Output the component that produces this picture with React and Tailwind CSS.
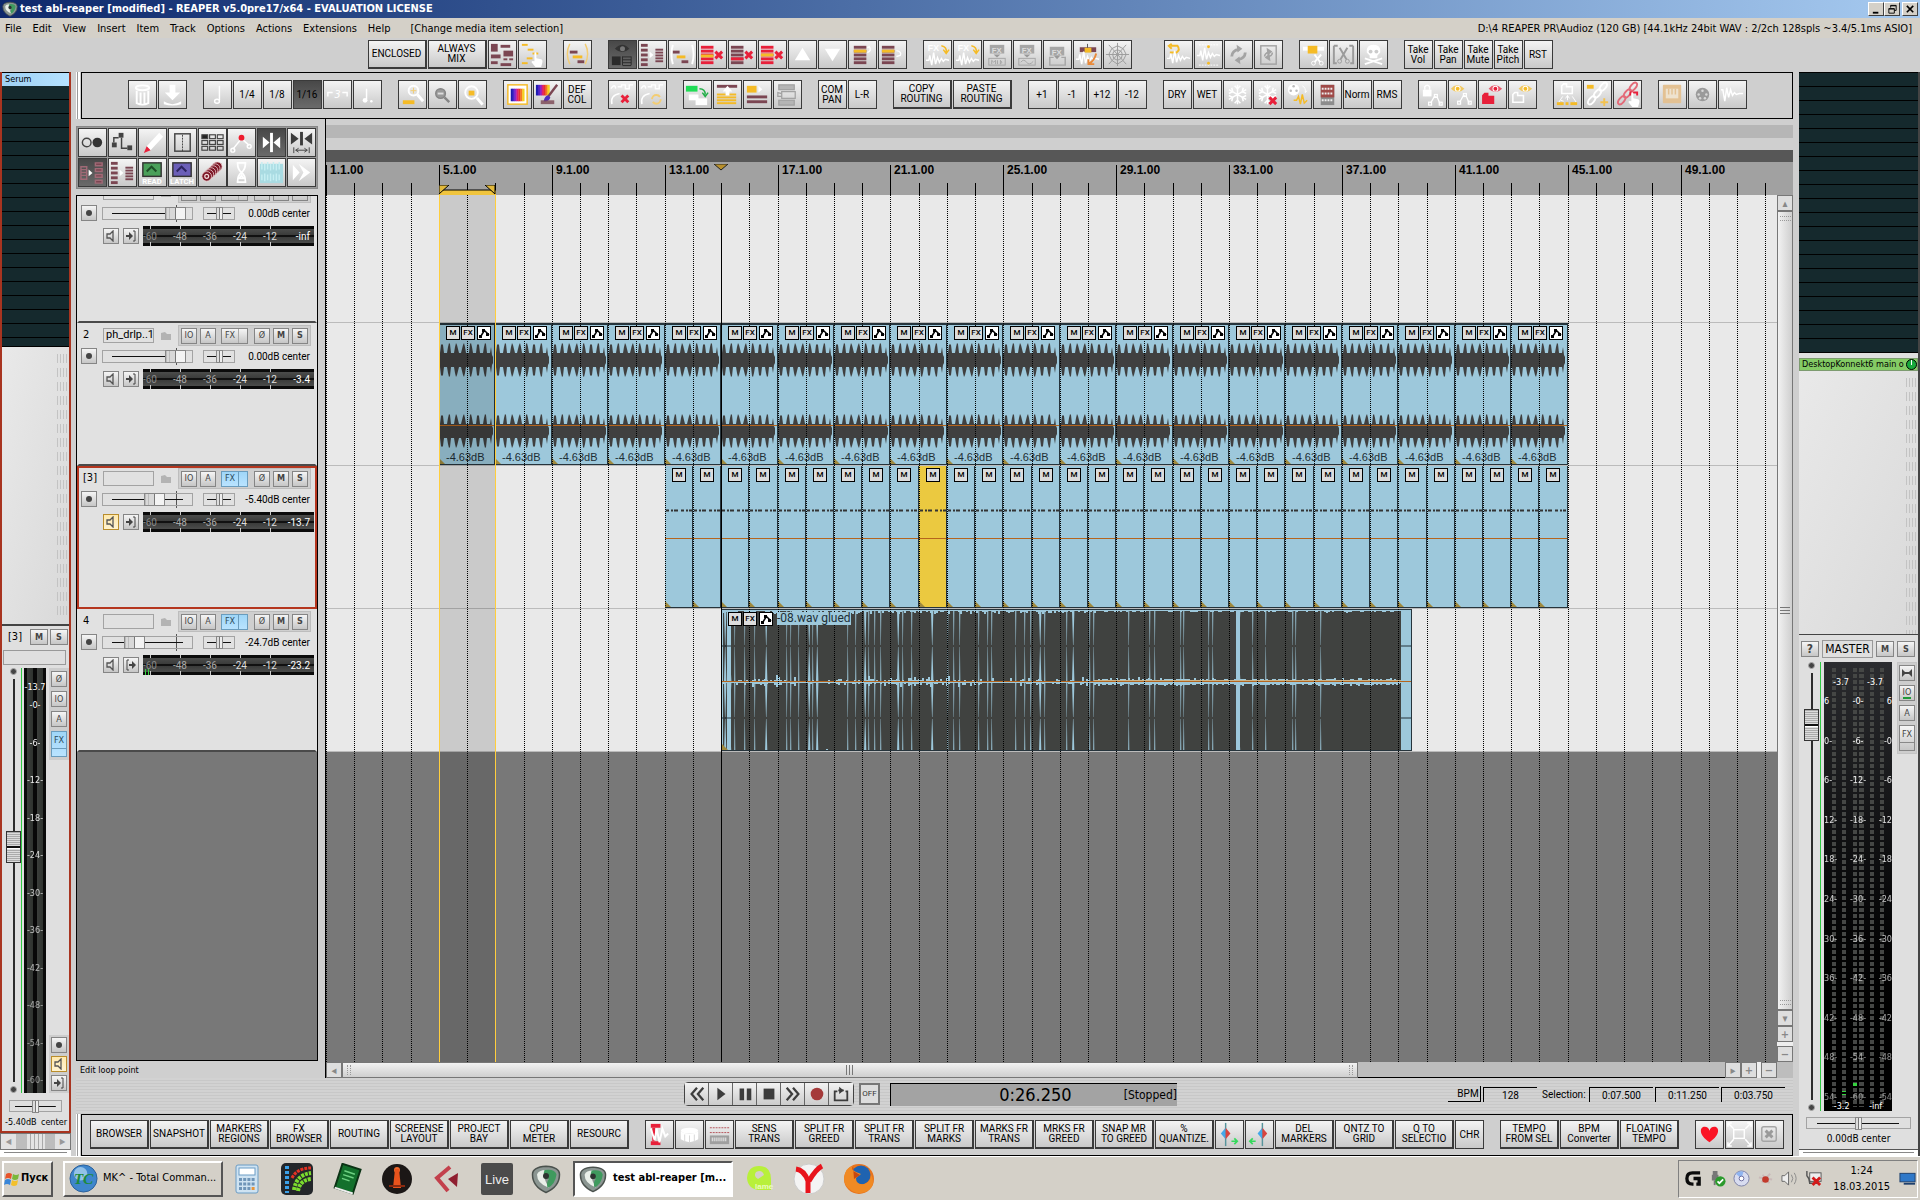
import React from 'react';

const BAR = 28.22;
const barX = (bar) => Math.round(bar * BAR);
const range = (n) => Array.from({ length: n }, (_, i) => i);

const MAROON = '#7b4652';
const GOLD = '#f5bb26';
const RED = '#e8203a';

// ---------- toolbar icons, all on a 28x28 board ----------

const Bars = ({ x = 4, y = 4, w = 10, n = 5, c = MAROON, step = 4, h = 3 }) =>
  range(n).map((i) => <rect key={i} x={x} y={y + i * step} width={w} height={h} fill={c} />);

const Cross = ({ x, y, s = 7, c = RED }) => (
  <path d={`M${x} ${y}l${s} ${s}M${x + s} ${y}l${-s} ${s}`} stroke={c} strokeWidth="3" fill="none" />
);

const Hand = ({ x = 14, y = 12 }) => (
  <path
    transform={`translate(${x} ${y})`}
    d="M3 0q2-1 2 1v5l5 1q2 1 1 4l-1 4h-6l-4-5q0-2 3-1z"
    fill="#fff"
  />
);

const FxText = ({ x = 4, y = 10, c = '#fff', size = 9 }) => (
  <text x={x} y={y} fontSize={size} fontWeight="bold" fontFamily="Liberation Sans, sans-serif" fill={c}>FX</text>
);

const Wave = ({ y = 18, c = '#fff' }) => (
  <path
    d={`M2 ${y}h3l1-5 2 10 2-13 2 12 2-7 2 5 2-4 2 3 2-2 4 1`}
    stroke={c}
    strokeWidth="1.5"
    fill="none"
  />
);

const Snow = ({ c = '#fff' }) => (
  <g stroke={c} strokeWidth="1.6" fill="none">
    <path d="M14 4v20M5 9l18 10M23 9l-18 10" />
    <path d="M11 5l3 3 3-3M11 23l3-3 3 3M5 13l4-2-1-4M23 15l-4 2 1 4M5 15l4 2-1 4M23 13l-4-2 1-4" />
  </g>
);

const Eye = ({ x = 8, y = 4, c = GOLD }) => (
  <g transform={`translate(${x} ${y})`}>
    <path d="M0 4q6-7 14 0q-7 7-14 0z" fill={c} opacity="0.7" />
    <circle cx="7" cy="4" r="3" fill="#fff" />
    <circle cx="7" cy="4" r="2" fill={c} />
  </g>
);

const Folder = ({ x = 4, y = 13, c = 'none', s = '#fff' }) => (
  <path transform={`translate(${x} ${y})`} d="M0 10V2l2-2h3v3h6v7z" fill={c} stroke={s} strokeWidth="1.6" />
);

const Nodes = ({ x = 10, y = 13 }) => (
  <g transform={`translate(${x} ${y})`} stroke="#fff" strokeWidth="1.3" fill="none">
    <path d="M2 10L6 3l3 1 3 7" />
    <rect x="0" y="9" width="3" height="3" />
    <rect x="6" y="1" width="3" height="3" />
    <rect x="11" y="9" width="3" height="3" />
  </g>
);

const Chain = ({ c = '#fff' }) => (
  <g stroke={c} strokeWidth="2" fill="none">
    <ellipse cx="8" cy="20" rx="5" ry="2.6" transform="rotate(-50 8 20)" />
    <ellipse cx="14" cy="13" rx="5" ry="2.6" transform="rotate(-50 14 13)" />
    <ellipse cx="20" cy="6" rx="5" ry="2.6" transform="rotate(-50 20 6)" />
  </g>
);

const Lens = ({ c = '#fff', cx = 12, cy = 12, r = 6 }) => (
  <g stroke={c} fill="none">
    <circle cx={cx} cy={cy} r={r} strokeWidth="2" />
    <path d={`M${cx + r - 1} ${cy + r - 1}l6 7`} strokeWidth="3" />
  </g>
);

const Reload = ({ x = 14, y = 14, r = 7 }) => (
  <g stroke="#a3a3a3" fill="none" strokeWidth={r / 2.4}>
    <path d={`M${x - r} ${y + 2}a${r} ${r} 0 0 1 ${r}-${r}M${x + r} ${y - 2}a${r} ${r} 0 0 1-${r} ${r}`} />
    <path d={`M${x - 2} ${y - r - 3}l6 4-5 4zM${x + 2} ${y + r + 3}l-6-4 5-4z`} fill="#a3a3a3" stroke="none" />
  </g>
);

const Spectrum = ({ x, y, w, h }) => (
  <g transform={`translate(${x} ${y})`}>
    {['#1d1bb0', '#4b23c8', '#8f23c8', '#e01f6f', '#e8322a', '#f57a1d', '#f5d21d'].map((c, i) => (
      <rect key={c} x={(i * w) / 7} width={w / 7 + 0.3} height={h} fill={c} />
    ))}
  </g>
);

const Split = ({ c }) => (
  <g>
    <path d="M14 4v20" stroke={c} strokeWidth="3" />
    <path d="M5 8v12l7-6zM23 8v12l-7-6z" fill={c} />
  </g>
);

const icons = {
  mess: (
    <g fill={MAROON}>
      <rect x="2" y="3" width="7" height="8" /><rect x="12" y="4" width="10" height="3" />
      <rect x="15" y="10" width="10" height="6" /><rect x="2" y="14" width="10" height="4" />
      <rect x="15" y="18" width="4" height="2" /><rect x="21" y="18" width="4" height="2" />
      <rect x="2" y="21" width="7" height="3" /><rect x="12" y="23" width="11" height="3" />
    </g>
  ),
  pickHand: (
    <g fill={GOLD}>
      <rect x="3" y="3" width="6" height="2" /><rect x="9" y="8" width="6" height="2" />
      <rect x="14" y="12" width="6" height="2" /><rect x="8" y="17" width="6" height="2" />
      <rect x="3" y="22" width="6" height="2" /><Hand x={13} y={12} />
    </g>
  ),
  bracketItems: (
    <g>
      <path d="M6 3q-5 10 0 21M22 3q5 10 0 21" stroke="#f3cd73" strokeWidth="1.5" fill="none" />
      <rect x="6" y="10" width="8" height="3" fill={MAROON} />
      <rect x="9" y="15" width="10" height="3" fill={GOLD} />
      <rect x="14" y="20" width="7" height="3" fill={MAROON} />
    </g>
  ),
  bracketWhite: (
    <g>
      <path d="M4 4q-3 10 0 20M24 4q3 10 0 20" stroke="#fff" strokeWidth="2" fill="none" />
      <rect x="4" y="10" width="7" height="3" fill={MAROON} />
      <rect x="8" y="15" width="9" height="3" fill={GOLD} />
      <rect x="13" y="20" width="7" height="3" fill={MAROON} />
    </g>
  ),
  eyeDark: (
    <g>
      <path d="M6 8q8-8 15 0q-7 7-15 0z" fill="#333" /><circle cx="14" cy="8" r="2.6" fill="#777" />
      <rect x="3" y="16" width="9" height="9" fill="#2b2b2b" />
      <Bars x={14} y={16} w={9} n={4} step={3} h={1} c="#2b2b2b" /><path d="M14 16v9M23 16v9" stroke="#2b2b2b" />
    </g>
  ),
  blocksToList: (
    <g>
      <Bars x={2} y={3} w={7} n={5} step={5} /><path d="M11 11v7l4-3.500z" fill="#fff" />
      <Bars x={17} y={8} w={8} n={5} step={3} h={2} />
    </g>
  ),
  listDelA: (
    <g>
      <Bars x={2} y={5} w={13} n={5} step={4} c={RED} /><rect x="2" y="14" width="13" height="3" fill={GOLD} />
      <Cross x={17} y={11} />
    </g>
  ),
  listDelB: (<g><Bars x={2} y={5} w={13} n={5} step={4} /><rect x="2" y="17" width="13" height="3" fill={RED} /><Cross x={17} y={11} /></g>),
  listDelC: (<g><Bars x={2} y={5} w={13} n={5} step={4} c={RED} /><rect x="2" y="13" width="13" height="3" fill={GOLD} /><Cross x={17} y={11} /></g>),
  up: <path d="M14 7l8 13H6z" fill="#fff" />,
  down: <path d="M14 21l8-13H6z" fill="#fff" />,
  listUp: (<g><Bars x={5} y={5} w={13} n={5} step={4} /><rect x="5" y="9" width="13" height="3" fill={GOLD} /><path d="M19 12q5-2 2-6l-2 1" stroke="#fff" strokeWidth="1.500" fill="none" /></g>),
  listDown: (<g><Bars x={3} y={5} w={13} n={5} step={4} /><rect x="3" y="9" width="13" height="3" fill={GOLD} /><path d="M18 10q6 1 4 5l-4 1" stroke="#fff" strokeWidth="1.500" fill="none" /></g>),
  fxWave: (<g><FxText /><path d="M18 5q6 1 5 7m-3-3l3 4 3-4" stroke={GOLD} strokeWidth="1.500" fill="none" /><Wave y={20} /></g>),
  fxMid: (
    <g><rect x="6" y="4" width="15" height="9" fill="#a6a6a6" /><FxText x={8} y={12} c="#ddd" size={8} /><path d="M10 14h7l-3.500 3z" fill="#999" />
      <rect x="5" y="18" width="17" height="7" fill="none" stroke="#a6a6a6" /><path d="M8 24v-4l2 2 2-2v4M14 20v4M17 20v4q3-2 0-4" stroke="#a6a6a6" fill="none" /></g>
  ),
  fxSine: (
    <g><rect x="6" y="4" width="15" height="9" fill="#a6a6a6" /><FxText x={8} y={12} c="#ddd" size={8} /><path d="M10 14h7l-3.500 3z" fill="#999" />
      <rect x="5" y="18" width="17" height="7" fill="none" stroke="#a6a6a6" /><path d="M7 22q3-4 6 0t7-1" stroke="#a6a6a6" fill="none" /></g>
  ),
  fxBox: (
    <g><rect x="6" y="6" width="15" height="9" fill="#a6a6a6" /><FxText x={8} y={14} c="#ddd" size={8} />
      <path d="M10 15h7l-3.500 4z" fill="#999" /><path d="M10 17H6v8h16v-8h-4" fill="none" stroke="#a6a6a6" strokeWidth="1.500" /></g>
  ),
  takeArrow: (
    <g><path d="M6 9h17" stroke={MAROON} strokeWidth="5" /><rect x="11" y="7" width="7" height="5" fill={GOLD} /><path d="M14 3v4" stroke="#555" /><Wave y={19} />
      <path d="M23 13q-2 8-7 10m5 1h-6v-5" stroke="#e98a3a" strokeWidth="2" fill="none" /></g>
  ),
  web: (
    <g stroke="#9c9c9c" fill="none"><path d="M14 2v24M2 14h24M5 4l18 20M23 4L5 24" /><path d="M14 5l6 3 3 6-3 6-6 4-6-4-3-6 3-6zM14 9l4 2 1 3-1 4-4 2-4-2-1-4 1-3z" /></g>
  ),
  undoWave: (<g><path d="M6 5h7q3 4-1 7H5m2-9L4 5l3 3" stroke={GOLD} strokeWidth="2" fill="none" /><Wave y={18} /></g>),
  waveBox: (<g><path d="M4 4h21M4 25h21" stroke="#fff" strokeDasharray="2 1" /><Wave y={15} /><circle cx="14" cy="6" r="1.500" fill={GOLD} /><circle cx="14" cy="23" r="1.500" fill={GOLD} /></g>),
  reload: <Reload />,
  reloadBox: (<g><rect x="6" y="5" width="16" height="19" fill="none" stroke="#a3a3a3" strokeWidth="1.500" /><Reload r={4} /></g>),
  cutGold: (<g><path d="M3 8h22" stroke="#fff" strokeWidth="4" /><rect x="8" y="5" width="10" height="8" fill={GOLD} /><path d="M15 14l6 8M22 14l-7 8" stroke="#fff" strokeWidth="2" /><circle cx="14" cy="23" r="2" fill="none" stroke="#fff" /><circle cx="22" cy="23" r="2" fill="none" stroke="#fff" /></g>),
  cutGray: (<g stroke="#9b9b9b" fill="none"><path d="M4 5h4M4 5v18h3M24 5h-4M24 5v18h-3" strokeWidth="2" /><path d="M10 7l7 12M18 7l-7 12" strokeWidth="2" /><circle cx="10" cy="21" r="2" /><circle cx="18" cy="21" r="2" /></g>),
  skull: (<g fill="#fff"><path d="M14 4q8 0 7 8l-3 3v3h-8v-3l-3-3q-1-8 7-8z" /><circle cx="11" cy="11" r="2" fill="#ccc" /><circle cx="17" cy="11" r="2" fill="#ccc" /><path d="M5 18l18 6M23 18L5 24" stroke="#fff" strokeWidth="2" /></g>),
  trash: (<g fill="none" stroke="#fff" strokeWidth="2"><ellipse cx="14" cy="7" rx="7" ry="2.500" /><path d="M8 10v13q6 3 12 0V10M12 12v12M16 12v12" /></g>),
  inbox: <g fill="#fff"><path d="M11 4h6v8h5l-8 8-8-8h5z" /><path d="M5 21q9 6 18 0v3q-9 3-18 0z" /></g>,
  noteHalf: <g stroke="#fff" strokeWidth="1.500" fill="none"><path d="M16 5v15" /><ellipse cx="13.500" cy="21" rx="2.500" ry="2" /></g>,
  triplet: <g stroke="#fff" fill="none" strokeWidth="1.500"><path d="M4 16v-4h5M19 12h5v4" /><text x="11" y="18" fontSize="11" fontStyle="italic" stroke="none" fill="#fff">3</text></g>,
  noteDot: <g fill="#fff"><path d="M13 8v11" stroke="#fff" strokeWidth="1.500" /><circle cx="11.500" cy="20" r="2.500" /><circle cx="18" cy="21" r="1.300" /></g>,
  zoomGold: <g><Lens cx={15} cy={10} r={5} /><path d="M12 10h6M15 7v6" stroke="#f3cd73" /><rect x="4" y="20" width="12" height="4" fill={GOLD} /></g>,
  zoomOut: <g><circle cx="12" cy="13" r="5" fill="#999" stroke="#858585" strokeWidth="1.500" /><path d="M9 13h6" stroke="#ddd" strokeWidth="2" /><path d="M16 17l5 5" stroke="#858585" strokeWidth="2.500" /></g>,
  zoomItem: <g><Lens cx={13} cy={12} r={6.5} /><rect x="10" y="10" width="6" height="5" fill={GOLD} /></g>,
  palette: <g><rect x="4" y="4" width="20" height="20" fill="#fff" stroke={GOLD} strokeWidth="1.500" /><Spectrum x={7} y={8} w={14} h={13} /></g>,
  brush: <g><Spectrum x={2} y={4} w={14} h={11} /><path d="M24 4L14 17" stroke={MAROON} strokeWidth="2.500" /><path d="M15 15q-4 0-5 6 5 1 7-4z" fill="#4f2ec0" /><path d="M7 20h14v4H7z" fill={MAROON} opacity=".8" /></g>,
  envDel: <g><path d="M2 8q4-6 5 0M9 6h4V4h4v4h4V4h4M3 24q-2-9 8-11" stroke="#fff" fill="none" strokeWidth="1.500" /><Cross x={13} y={15} /></g>,
  envReload: <g><path d="M2 8q4-6 5 0M9 6h4V4h4v4h4V4h4M3 24q-2-9 8-11" stroke="#fff" fill="none" strokeWidth="1.500" /><circle cx="18" cy="19" r="4.500" fill="none" stroke="#f3cd73" strokeWidth="2" strokeDasharray="11 3" /></g>,
  greenCopy: <g><rect x="2" y="5" width="12" height="6" fill="#1fdc55" /><path d="M16 8q6 0 6 6m-3-2l3 4 3-4" stroke="#1fae45" strokeWidth="1.500" fill="none" /><rect x="5" y="14" width="10" height="6" fill="#fff" /><rect x="12" y="18" width="12" height="7" fill="#fff" /></g>,
  stackUp: <g><rect x="3" y="4" width="21" height="3" fill={MAROON} /><Bars x={3} y={13} w={20} n={4} step={3} h={2} c={GOLD} /><path d="M14 5l5 6h-3v4h-4v-4H9z" fill="#fff" /></g>,
  goldPlay: <g><rect x="3" y="5" width="10" height="7" fill={GOLD} /><path d="M15 5v7l4-3.500z" fill="#fff" /><Bars x={3} y={15} w={21} n={2} step={5} /></g>,
  grayStack: <g fill="none" stroke="#a2a2a2" strokeWidth="1.300"><rect x="5" y="4" width="16" height="5" fill="#b5b5b5" /><rect x="8" y="11" width="14" height="7" /><path d="M8 13l-4-1v4h4" /><rect x="5" y="20" width="16" height="5" fill="#b5b5b5" /></g>,
  snow: <Snow />,
  snowDel: <g><Snow /><Cross x={16} y={17} /></g>,
  reelWave: <g><circle cx="10" cy="9" r="6" fill="#fff" /><g fill="#bbb"><circle cx="10" cy="5.500" r="1.300" /><circle cx="7" cy="10" r="1.300" /><circle cx="13" cy="10" r="1.300" /></g><path d="M19 5q4 2 3 7l2-2" stroke="#fff" fill="none" /><path d="M10 20h3l2-4 2 8 2-10 2 9 3-3" stroke={GOLD} strokeWidth="1.500" fill="none" /></g>,
  sheet: <g><rect x="7" y="4" width="14" height="21" fill="#8d8d8d" /><rect x="7" y="4" width="14" height="13" fill="#a04a48" /><path d="M8 8h12M8 13h12M8 20h12" stroke="#eee" strokeDasharray="2 1" strokeWidth="2" /></g>,
  lockNodes: <g><rect x="4" y="9" width="9" height="7" fill="#fff" /><path d="M6 9V6q2.500-3 5 0v3" stroke="#fff" strokeWidth="1.500" fill="none" /><Nodes x={10} y={13} /></g>,
  eyeNodes: <g><Eye x={2} y={4} /><Nodes x={9} y={12} /></g>,
  eyeFolderRed: <g><Eye x={10} y={4} c={RED} /><Folder x={4} y={13} c={RED} s={RED} /></g>,
  eyeFolder: <g><Eye x={10} y={4} /><Folder x={4} y={12} /></g>,
  folderSpread: <g><Folder x={8} y={3} /><path d="M14 15v5M10 21l-3-1M9 16l-4 6M19 16l4 6M12 18l2-3 2 3" stroke="#fff" fill="none" /><Bars x={3} y={22} w={7} n={1} c={GOLD} /><Bars x={12} y={22} w={3} n={1} c={GOLD} /><Bars x={17} y={22} w={7} n={1} c={GOLD} /></g>,
  chainGold: <g><Chain /><rect x="3" y="4" width="7" height="4" fill={GOLD} /><path d="M21 18v8M17 22h8" stroke="#f3c250" strokeWidth="2" /></g>,
  chainRed: <g><Chain c="#e36a78" /><path d="M17 15v-3h7v3" stroke={RED} strokeWidth="2" fill="none" /><Hand x={15} y={12} /></g>,
  keys: <g><rect x="4" y="4" width="19" height="19" rx="1" fill="#e3c193" /><path d="M7 8h13v10H7z" fill="#eee2ce" /><path d="M10 8v6M13.500 8v6M17 8v6" stroke="#e3c193" strokeWidth="1.500" /></g>,
  dial: <g><circle cx="14" cy="14" r="7" fill="#9a9a9a" /><g fill="#d8d8d8"><circle cx="14" cy="10" r="1.300" /><circle cx="10" cy="14" r="1.300" /><circle cx="18" cy="14" r="1.300" /><circle cx="11.500" cy="18" r="1.300" /><circle cx="16.500" cy="18" r="1.300" /></g></g>,
  wave: <path d="M2 9l2 0 2 12 2-14 2 10 2-8 2 6 2-3 2 2 3-1 4 0" stroke="#fff" strokeWidth="1.500" fill="none" />,
  circles: <g><circle cx="8" cy="14" r="4.500" fill="none" stroke="#444" strokeWidth="1.500" /><circle cx="19" cy="14" r="5" fill="#333" /></g>,
  graph: <g fill="#444"><rect x="3" y="14" width="5" height="5" /><rect x="10" y="4" width="5" height="5" /><rect x="19" y="17" width="5" height="5" /><path d="M5 14V9h5M13 9v11h6" stroke="#444" fill="none" strokeWidth="1.500" /></g>,
  pencil: <g><path d="M21 4l4 4-13 14-4-4z" fill="#fff" /><path d="M8 18l4 4-7 3z" fill={RED} /></g>,
  pages: <g stroke="#444" fill="none"><rect x="6" y="5" width="16" height="18" strokeWidth="1.500" /><path d="M14 6v17" strokeDasharray="2 1" /></g>,
  cells: <g>{range(9).map((i) => (<rect key={i} x={3 + (i % 3) * 8} y={6 + Math.floor(i / 3) * 6} width="6" height="4" fill={i === 0 ? '#222' : 'none'} stroke="#444" strokeWidth="1.200" />))}</g>,
  peak: <g stroke="#fff" fill="none" strokeWidth="1.500"><path d="M5 21l9-11 8 7" /><circle cx="5" cy="22" r="2" /><circle cx="22" cy="18" r="2" /><circle cx="14" cy="9" r="3" fill="#ee1c2e" stroke="none" /></g>,
  splitWhite: <Split c="#fff" />,
  splitWide: (
    <g>
      <path d="M14 3v14" stroke="#3c3c3c" strokeWidth="3" /><path d="M3 4v12l8-6zM25 4v12l-8-6z" fill="#3c3c3c" />
      <path d="M6 19v6M22 19v6M8 22h12M11 20l-3 2 3 2M17 20l3 2-3 2" stroke="#444" fill="none" />
    </g>
  ),
  moveDark: (
    <g stroke="#a06a76" strokeWidth="1.500">
      <path d="M2 8h6v13H2zM2 11h6M2 14h6M2 17h6" fill="none" />
      <path d="M10 11v7l4-3.500z" fill="#fff" stroke="none" />
      <path d="M17 4h7v3h-7zM17 10h7v3h-7zM17 16h7v3h-7zM17 22h7v3h-7z" fill={MAROON} />
    </g>
  ),
  read: <g><rect x="4" y="4" width="19" height="14" fill="#4aa05a" stroke="#333" strokeWidth="1.500" /><path d="M8 13l5-5 5 5" stroke="#1d4f27" strokeWidth="2" fill="none" /><text x="13.500" y="26" textAnchor="middle" fontSize="8" fontWeight="bold" fontFamily="Roboto, sans-serif" fill="#fff">READ</text></g>,
  latch: <g><rect x="4" y="4" width="19" height="14" fill="#6b5fb8" stroke="#333" strokeWidth="1.500" /><path d="M8 13l5-5 5 5" stroke="#2c2460" strokeWidth="2" fill="none" /><text x="13.500" y="26" textAnchor="middle" fontSize="8" fontWeight="bold" fontFamily="Roboto, sans-serif" fill="#fff">LATCH</text></g>,
  discs: <g stroke="#f0d8d8" strokeWidth=".8" fill="#7c1626">{range(6).map((i) => (<circle key={i} cx={19 - i * 2.2} cy={8 + i * 2} r="5" />))}<circle cx="8" cy="18" r="2" fill="none" strokeWidth="1.300" /></g>,
  glass: <path d="M9 4h10M9 24h10M10 5q0 6 4 9-4 3-4 9M18 5q0 6-4 9 4 3 4 9M12 20l2-3 2 3z" stroke="#fff" strokeWidth="1.800" fill="none" />,
  blueWaves: <g><rect x="2" y="5" width="24" height="20" fill="#a9dbe2" /><path d="M4 3v8M7 5v7M10 3v8M13 5v7M16 3v8M19 5v7M22 3v8M4 16v6M7 15v8M10 16v6M13 15v8M16 16v6M19 15v8M22 16v6" stroke="#c6eef2" strokeWidth="1.500" /></g>,
  forward: <path d="M5 6l7 8-7 8zM11 5l12 9-12 9 5-9z" fill="#fff" />,
  redWave: <g><rect x="5" y="3" width="10" height="4" fill={RED} /><rect x="5" y="21" width="10" height="4" fill={RED} /><path d="M8 7v14" stroke={RED} strokeWidth="3" /><path d="M5 8l4 12 2-12 3 14 3-14 3 8 3-3" stroke="#fff" strokeWidth="2" fill="none" /></g>,
  drum: <g fill="#fff"><ellipse cx="14" cy="10" rx="9" ry="3" /><path d="M5 11v8q9 6 18 0v-8q-9 5-18 0z" /><path d="M9 14v8M14 15v8M19 14v8" stroke="#d6d6d6" /></g>,
  midiWave: <g><path d="M4 7h20M4 12h20" stroke="#b5525a" strokeDasharray="2 1" /><rect x="4" y="15" width="20" height="9" fill="#9f9f9f" /><path d="M6 19h16" stroke="#eee" strokeWidth="4" strokeDasharray="1 1" /></g>,
  markRight: <g><path d="M10 2v24" stroke="#57949c" strokeWidth="1.500" /><path d="M10 7l-5 6 5 6z" fill="#44a7e8" /><path d="M10 7l5 6-5 6z" fill="#d8433f" /><path d="M16 21h5M19 18l3 3-3 3" stroke="#35d95c" strokeWidth="1.800" fill="none" /></g>,
  markLeft: <g><path d="M17 2v24" stroke="#57949c" strokeWidth="1.500" /><path d="M17 7l-5 6 5 6z" fill="#44a7e8" /><path d="M17 7l5 6-5 6z" fill="#d8433f" /><path d="M5 21h5M7 18l-3 3 3 3" stroke="#35d95c" strokeWidth="1.800" fill="none" /></g>,
  heart: <path d="M14 22C2 14 4 6 9 6q4 0 5 4 1-4 5-4c5 0 7 8-5 16z" fill="#fb1425" />,
  expand: <g stroke="#fff" fill="none" strokeWidth="1.500"><rect x="8" y="9" width="11" height="9" /><path d="M2 2l6 6M26 2l-6 6M2 26l6-7M26 26l-6-7M2 6V2h4M22 2h4v4M2 22v4h4M26 22v4h-4" /></g>,
  closeGray: <g><rect x="6" y="6" width="15" height="15" rx="2" fill="none" stroke="#a5a5a5" strokeWidth="1.500" /><Cross x={10} y={10} c="#9a9a9a" /></g>,
};

// a toolbar is a list of groups; "t:" is a text button, "w:" a wide text button, "!" means pressed,
// an empty group only widens the gap
const topToolbar = [
  ['w:ENCLOSED', 'w:ALWAYS\nMIX', 'mess', 'pickHand'],
  ['bracketItems'],
  ['!eyeDark', 'blocksToList', 'bracketWhite', 'listDelA', 'listDelB', 'listDelC', 'up', 'down', 'listUp', 'listDown'],
  ['fxWave', 'fxWave', 'fxMid', 'fxSine', 'fxBox', 'takeArrow', 'web'],
  [],
  ['undoWave', 'waveBox', 'reload', 'reloadBox'],
  ['cutGold', 'cutGray', 'skull'],
  ['t:Take\nVol', 't:Take\nPan', 't:Take\nMute', 't:Take\nPitch', 't:RST'],
];

const midToolbar = [
  ['trash', 'inbox'],
  ['noteHalf', 't:1/4', 't:1/8', '!t:1/16', 'triplet', 'noteDot'],
  ['zoomGold', 'zoomOut', 'zoomItem'],
  ['palette', 'brush', 't:DEF\nCOL'],
  ['envDel', 'envReload'],
  ['greenCopy', 'stackUp', 'goldPlay', 'grayStack'],
  ['t:COM\nPAN', 't:L-R'],
  ['w:COPY\nROUTING', 'w:PASTE\nROUTING'],
  ['t:+1', 't:-1', 't:+12', 't:-12'],
  ['t:DRY', 't:WET', 'snow', 'snowDel', 'reelWave', 'sheet', 't:Norm', 't:RMS'],
  ['lockNodes', 'eyeNodes', 'eyeFolderRed', 'eyeFolder'],
  ['folderSpread', 'chainGold', 'chainRed'],
  ['keys', 'dial', 'wave'],
];

const bottomToolbar = [
  ['w:BROWSER', 'w:SNAPSHOT', 'w:MARKERS\nREGIONS', 'w:FX\nBROWSER', 'w:ROUTING', 'w:SCREENSE\nLAYOUT', 'w:PROJECT\nBAY', 'w:CPU\nMETER', 'w:RESOURC'],
  ['redWave', 'drum', 'midiWave', 'w:SENS\nTRANS', 'w:SPLIT FR\nGREED', 'w:SPLIT FR\nTRANS', 'w:SPLIT FR\nMARKS', 'w:MARKS FR\nTRANS', 'w:MRKS FR\nGREED', 'w:SNAP MR\nTO GREED', 'w:%\nQUANTIZE.', 'markRight', 'markLeft', 'w:DEL\nMARKERS', 'w:QNTZ TO\nGRID', 'w:Q TO\nSELECTIO', 't:CHR'],
  ['w:TEMPO\nFROM SEL', 'w:BPM\nConverter', 'w:FLOATING\nTEMPO'],
  ['heart', 'expand', 'closeGray'],
];

const tcpIcons = [
  'circles', 'graph', 'pencil', 'pages', 'cells', 'peak', '!splitWhite', 'splitWide',
  '!moveDark', 'blocksToList', 'read', 'latch', 'discs', 'glass', 'blueWaves', 'forward',
];

const ToolButton = ({ item }) => {
  const pressed = item.startsWith('!');
  const key = pressed ? item.slice(1) : item;
  const tone = pressed ? 'bg-linear-to-b from-[#484848] to-[#6a6a6a]' : 'bg-linear-to-b from-[#f4f4f4] to-[#c9c9c9]';
  if (key.startsWith('w:') || key.startsWith('t:')) {
    const wide = key.startsWith('w:');
    return (
      <button
        type="button"
        className={`flex h-[29px] shrink-0 items-center justify-center whitespace-pre text-center font-[Roboto,sans-serif] text-[10px] leading-[10px] text-black ${tone} ${
          wide ? 'w-[59px] border border-r-2 border-b-2 border-[#3a3a3a]' : 'w-[29px] border border-[#3a3a3a]'
        }`}
      >
        {key.slice(2)}
      </button>
    );
  }
  return (
    <button type="button" aria-label={key} className={`h-[29px] w-[29px] shrink-0 border border-[#3a3a3a] ${tone}`}>
      <svg viewBox="0 0 28 28" className="h-[27px] w-[27px]">{icons[key]}</svg>
    </button>
  );
};

const Toolbar = ({ groups, className }) => (
  <div className={`flex justify-center gap-4 ${className}`}>
    {groups.map((group, i) => (
      <div key={i} className="flex gap-px">
        {group.map((item, j) => <ToolButton key={j} item={item} />)}
      </div>
    ))}
  </div>
);

// ---------- small controls shared by the panels ----------

const MiniButton = ({ label, children, tone = 'gray', className = 'h-4 w-4' }) => {
  const tones = {
    gray: 'border-[#858585] from-[#f5f5f5] to-[#c6c6c6] text-[#444]',
    blue: 'border-[#6a9cbd] from-[#9fd6f8] to-[#b9e3ff] text-[#2c4a5c]',
    gold: 'border-[#b98d2c] from-[#ffe9ad] to-[#fff3cf] text-[#444]',
  };
  return (
    <button
      type="button"
      aria-label={label}
      className={`flex shrink-0 items-center justify-center border bg-linear-to-b text-[9px] leading-none ${tones[tone]} ${className}`}
    >
      {children}
    </button>
  );
};

const Rec = () => <span className="h-[6px] w-[6px] rounded-full bg-[#444]" />;
const Speaker = () => (
  <svg viewBox="0 0 12 12" className="h-3 w-3"><path d="M2 4h3l3-3v10l-3-3H2z" fill="none" stroke="#555" strokeWidth="1.300" /></svg>
);
const InputIcon = () => (
  <svg viewBox="0 0 12 12" className="h-3 w-3"><path d="M1 5h3V2l4 4-4 4V7H1z" fill="#444" /><path d="M8 1h2v10H8" fill="none" stroke="#444" /></svg>
);
const OutputIcon = () => (
  <svg viewBox="0 0 12 12" className="h-3 w-3"><path d="M4 5h3V2l4 4-4 4V7H4z" fill="#444" /><path d="M4 1H2v10h2" fill="none" stroke="#444" /></svg>
);

const HSlider = ({ label, value, pan, className }) => (
  <input
    type="range"
    aria-label={label}
    defaultValue={value}
    className={`m-0 shrink-0 appearance-none border border-[#a3a3a3] bg-[linear-gradient(#111,#111)] bg-[length:80%_1px] bg-center bg-no-repeat [&::-webkit-slider-thumb]:appearance-none [&::-webkit-slider-thumb]:border [&::-webkit-slider-thumb]:border-[#888] [&::-webkit-slider-thumb]:h-[13px] ${
      pan
        ? '[&::-webkit-slider-thumb]:w-[7px] [&::-webkit-slider-thumb]:bg-[linear-gradient(90deg,#ddd_2px,#777_2px,#777_3px,#eee_3px)]'
        : '[&::-webkit-slider-thumb]:w-[21px] [&::-webkit-slider-thumb]:bg-[linear-gradient(90deg,#bbb_1px,#d8d8d8_1px,#d8d8d8_3px,#bbb_3px,#bbb_4px,#d8d8d8_4px,#d8d8d8_9px,#777_9px,#777_10px,#f3f3f3_10px)]'
    } ${className}`}
  />
);

const VSlider = ({ label, value }) => (
  <input
    type="range"
    aria-label={label}
    defaultValue={value}
    className="m-0 min-h-0 w-4 flex-1 appearance-none bg-transparent bg-[linear-gradient(#2b2b2b,#2b2b2b)] bg-[length:2px_100%] bg-center bg-no-repeat [direction:rtl] [writing-mode:vertical-lr] [&::-webkit-slider-thumb]:h-8 [&::-webkit-slider-thumb]:w-[15px] [&::-webkit-slider-thumb]:appearance-none [&::-webkit-slider-thumb]:border [&::-webkit-slider-thumb]:border-[#333] [&::-webkit-slider-thumb]:bg-[linear-gradient(transparent_14px,#111_14px,#111_16px,#fff_16px,#fff_17px,transparent_17px),repeating-linear-gradient(#aaa_0px,#aaa_1px,#dcdcdc_1px,#dcdcdc_2px)]"
  />
);

const Screw = () => <span className="h-[7px] w-[7px] rounded-full border border-[#aaa] bg-[#444]" />;

const Hatches = ({ count }) => (
  <div className="flex min-h-0 flex-1 basis-0 flex-col items-end gap-[5px] overflow-hidden bg-linear-to-br from-[#e9e9e9] to-[#d9d9d9] pt-[7px] pr-[2px]">
    {range(count).map((i) => (
      <div key={i} className="h-[9px] w-[10px] shrink-0 bg-[repeating-linear-gradient(90deg,#c3c3c3_0px,#c3c3c3_1px,transparent_1px,transparent_3px)]" />
    ))}
  </div>
);

const FxSlots = ({ count, first }) => (
  <div className="shrink-0 border-t border-black bg-[#15292d]">
    {first && (
      <button type="button" className="block h-[13px] w-full bg-linear-to-r from-[#9fd0f3] to-[#b5e2ff] pl-[3px] text-left text-[9px] leading-[13px] text-black">
        {first}
      </button>
    )}
    {range(count).map((i) => <div key={i} className="h-[14px] border-b border-black" />)}
  </div>
);

// ---------- left mixer strip ----------

const leftScale = ['0', '6', '12', '18', '24', '30', '36', '42', '48', '54', '60'];

const LeftStrip = () => (
  <aside className="flex w-[71px] shrink-0 flex-col">
    <div className="flex flex-1 flex-col border-x-2 border-b-2 border-[#a83420] bg-[#dfdfdf]">
      <FxSlots count={18} first="Serum" />
      <div className="h-[9px] border-b border-black bg-[#15292d]" />
      <Hatches count={19} />
      <div className="flex h-[507px] shrink-0 flex-col border-t-2 border-[#444] pt-[3px]">
        <div className="flex items-center gap-[2px] pl-[6px]">
          <span className="w-[20px] text-[11px] leading-4">[3]</span>
          <MiniButton label="Mute" className="h-4 w-[18px] font-bold">M</MiniButton>
          <MiniButton label="Solo" className="h-4 w-[18px] font-bold">S</MiniButton>
        </div>
        <input aria-label="Track name" className="mt-[5px] ml-px h-[15px] w-[63px] border border-[#999] bg-transparent" />
        <div className="mt-[3px] flex min-h-0 flex-1">
          <div className="flex w-[19px] flex-col items-center gap-1 pl-1">
            <Screw /><VSlider label="Volume" value={59} /><Screw />
          </div>
          <div className="mr-[2px] w-px bg-[#2fc943]" />
          <div className="flex w-[22px] flex-col bg-[linear-gradient(90deg,#0a0a0a_3px,#3b3e3b_3px,#2f332f_9px,#080808_9px,#080808_13px,#3b3e3b_13px,#2f332f_19px,#0a0a0a_19px)] text-center text-[9px] text-white">
            <span className="mt-[14px] leading-[10px]">-13.7</span>
            <div className="mt-2 mb-2 flex flex-1 flex-col justify-between">
              {leftScale.map((n, i) => (
                <span key={n} className="leading-[10px]" style={{ opacity: 1 - i * 0.05 }}>-{n}-</span>
              ))}
            </div>
          </div>
          <div className="ml-[3px] flex flex-1 flex-col justify-between">
            <div className="flex flex-col items-center gap-1 bg-[#cdcdcd] py-[3px]">
              <MiniButton label="Phase">Ø</MiniButton>
              <MiniButton label="Routing">IO</MiniButton>
              <MiniButton label="Automation">A</MiniButton>
              <MiniButton label="FX" tone="blue" className="h-[26px] w-4">
                <span className="-mx-px flex h-full w-[14px] flex-col"><span className="flex-1 border-b border-[#6a9cbd] pt-1">FX</span><span className="h-[7px]" /></span>
              </MiniButton>
            </div>
            <div className="flex flex-col items-center gap-[3px] bg-[#cdcdcd] py-[2px]">
              <MiniButton label="Record arm"><Rec /></MiniButton>
              <MiniButton label="Monitor" tone="gold"><Speaker /></MiniButton>
              <MiniButton label="Input"><InputIcon /></MiniButton>
            </div>
          </div>
        </div>
        <HSlider label="Pan" value={50} pan className="mt-[7px] ml-[7px] h-[12px] w-[53px]" />
        <div className="mt-1 mb-[3px] flex justify-between pr-[2px] pl-[3px] text-[9px] leading-[12px]">
          <span>-5.40dB</span><span>center</span>
        </div>
      </div>
    </div>
    <div className="flex h-[17px] items-center border border-[#777] bg-[#bdbdbd]">
      <button type="button" aria-label="Scroll left" className="h-full w-[15px] bg-[#e2e2e2] text-[8px] text-[#999]">◀</button>
      <div className="mx-auto h-full w-[18px] bg-[repeating-linear-gradient(90deg,#e4e4e4_0px,#e4e4e4_3px,#aaa_3px,#aaa_4px)]" />
      <button type="button" aria-label="Scroll right" className="h-full w-[15px] bg-[#e2e2e2] text-[8px] text-[#999]">▶</button>
    </div>
    <div className="h-[6px] bg-white pt-[2px]"><div className="mx-1 h-px bg-[#888]" /></div>
  </aside>
);

// ---------- master strip ----------

const masterRows = [
  ['6', '-0-', '6'], ['0-', '-6-', '-0'], ['6-', '-12-', '-6'], ['12-', '-18-', '-12'], ['18-', '-24-', '-18'],
  ['24-', '-30-', '-24'], ['30-', '-36-', '-30'], ['36-', '-42-', '-36'], ['42-', '-48-', '-42'], ['48-', '-54-', '-48'],
  ['54-', '-60-', '-54'],
];

const MasterStrip = () => (
  <aside className="flex w-[121px] shrink-0 flex-col border-r-2 border-[#444]">
    <FxSlots count={20} />
    <div className="flex flex-1 flex-col border-b border-[#555] bg-[#dfdfdf]">
      <div className="mt-[5px] flex h-[13px] items-center justify-between border border-[#7d9b70] bg-[#84cb65] pl-[2px] text-[9px]">
        <span className="overflow-hidden whitespace-nowrap">DesktopKonnekt6 main o</span>
        <span className="flex h-[11px] w-[11px] shrink-0 justify-center rounded-full border border-black bg-[#18a83c]">
          <span className="h-[5px] w-px bg-white" />
        </span>
      </div>
      <Hatches count={19} />
      <div className="flex h-[515px] shrink-0 flex-col border-t border-[#444] pt-[5px]">
        <div className="flex items-center gap-[3px] pl-[2px]">
          <MiniButton label="Help" className="h-4 w-[18px] text-[12px] font-bold">?</MiniButton>
          <span className="h-[18px] w-[51px] border border-[#999] text-center text-[12px] leading-4">MASTER</span>
          <MiniButton label="Mute master" className="h-4 w-[18px] font-bold">M</MiniButton>
          <MiniButton label="Solo master" className="h-4 w-[18px] font-bold">S</MiniButton>
        </div>
        <div className="mt-1 flex min-h-0 flex-1">
          <div className="flex w-[21px] flex-col items-center gap-1 pl-1">
            <Screw /><VSlider label="Master volume" value={91} /><Screw />
          </div>
          <div className="mr-[3px] w-px bg-[#2fc943]" />
          <div className="relative flex w-[68px] flex-col bg-linear-to-b from-[#2b2c2f] to-black text-[9px] text-white">
            <div className="absolute inset-x-0 top-[6px] bottom-1 flex justify-center gap-[4px] [mask-image:repeating-linear-gradient(#000_0px,#000_4px,transparent_4px,transparent_6px)]">
              <span className="mr-[2px] w-[4px] bg-[#454745]" />
              <span className="flex w-[4px] flex-col justify-end bg-[#454745] pb-3"><span className="h-1 bg-[#35d23f]" /></span>
              <span className="-mr-[3px] ml-[3px] flex w-[4px] flex-col justify-end bg-[#454745] pb-5"><span className="h-1 bg-[#35d23f]" /></span>
              <span className="ml-px w-[5px] bg-[#454745]" />
              <span className="ml-[2px] w-[4px] bg-[#454745]" />
              <span className="ml-[2px] w-[4px] bg-[#454745]" />
            </div>
            <div className="relative mt-[15px] flex justify-around leading-[10px]"><span>-3.7</span><span>-3.7</span></div>
            <div className="relative mt-[9px] flex flex-1 flex-col justify-between">
              {masterRows.map(([l, m, r], i) => (
                <div key={m} className="grid grid-cols-3 leading-[10px]" style={{ opacity: 1 - i * 0.05 }}>
                  <span>{l}</span><span className="text-center">{m}</span><span className="text-right">{r}</span>
                </div>
              ))}
            </div>
            <div className="relative flex justify-around leading-[9px]"><span>-3.2</span><span>-inf</span></div>
          </div>
          <div className="ml-[5px] flex h-[92px] w-[20px] flex-col items-center gap-1 border border-[#c4c4c4] bg-[#cdcdcd] py-[2px]">
            <MiniButton label="Mono">
              <svg viewBox="0 0 12 12" className="h-3 w-3"><path d="M1 2v8l4-4zM11 2v8L7 6z" fill="#444" /><path d="M4 6h4" stroke="#444" strokeWidth="2" /></svg>
            </MiniButton>
            <MiniButton label="Master routing"><span className="border-b-2 border-[#1f9a38]">IO</span></MiniButton>
            <MiniButton label="Master automation">A</MiniButton>
            <MiniButton label="Master FX" className="h-[26px] w-4">
              <span className="-mx-px flex h-full w-[14px] flex-col"><span className="flex-1 border-b border-[#888] pt-1">FX</span><span className="h-[7px]" /></span>
            </MiniButton>
          </div>
        </div>
        <HSlider label="Master pan" value={50} pan className="mt-[6px] ml-[7px] h-[12px] w-[105px]" />
        <div className="mt-[3px] mb-[3px] text-center text-[10px] leading-[14px]">0.00dB center</div>
      </div>
    </div>
    <div className="h-[6px] bg-white pt-[2px]"><div className="mx-1 h-px bg-[#888]" /></div>
  </aside>
);

// ---------- track control panel ----------

const tracks = [
  { id: '1', name: '', volume: 91, db: '0.00dB center', peak: '-inf' },
  { id: '2', name: 'ph_drlp..1', volume: 91, db: '0.00dB center', peak: '-3.4' },
  { id: '[3]', name: '', volume: 60, db: '-5.40dB center', peak: '-13.7', fx: true, selected: true, monitor: true },
  { id: '4', name: '', volume: 31, db: '-24.7dB center', peak: '-23.2', fx: true, output: true },
];

const TrackPanel = ({ track }) => (
  <section
    className={`flex h-[143px] flex-col border-b-2 ${
      track.selected ? 'border-2 border-[#b5361f] bg-[#e1e1e1]' : 'border-[#4a4a4a] border-x-2 border-x-transparent bg-[#e1e1e1] pt-[2px]'
    }`}
  >
    <div className="flex h-[21px] items-center">
      <span className="w-[24px] pl-[4px] text-[11px]">{track.id}</span>
      <input
        aria-label={`Name of track ${track.id}`}
        defaultValue={track.name}
        className="h-[15px] w-[51px] border border-[#a3a3a3] bg-transparent pl-[2px] font-[Roboto,sans-serif] text-[11px]"
      />
      <svg viewBox="0 0 10 8" className="mx-[7px] h-2 w-[10px]"><path d="M0 8V1l4-1 2 2h4v6z" fill="#b3b3b3" /></svg>
      <div className="flex h-[21px] items-center gap-[3px] border border-[#bdbdbd] bg-[#cfcfcf] px-[2px]">
        <MiniButton label="Routing">IO</MiniButton>
        <MiniButton label="Automation">A</MiniButton>
        <MiniButton label="FX" tone={track.fx ? 'blue' : 'gray'} className="ml-[2px] h-4 w-[27px]">
          <span className="flex-1 text-center">FX</span>
          <span className={`h-full w-[9px] border-l ${track.fx ? 'border-[#6a9cbd]' : 'border-[#aaa]'}`} />
        </MiniButton>
        <MiniButton label="Phase" className="ml-[3px] h-4 w-4">Ø</MiniButton>
        <MiniButton label="Mute" className="h-4 w-4 font-bold">M</MiniButton>
        <MiniButton label="Solo" className="h-4 w-4 font-bold">S</MiniButton>
      </div>
    </div>
    <div className="mt-[2px] flex h-4 items-center pl-[2px]">
      <MiniButton label="Record arm"><Rec /></MiniButton>
      <div className="relative ml-[5px] flex">
        <span className="absolute left-[74px] -top-[2px] h-[17px] w-px bg-[#555]" />
        <HSlider label="Volume" value={track.volume} className="relative h-[13px] w-[91px]" />
      </div>
      <HSlider label="Pan" value={50} pan className="ml-[10px] h-[13px] w-[32px]" />
      <span className="flex-1 pr-[5px] text-right font-[Roboto,sans-serif] text-[10px] whitespace-nowrap">{track.db}</span>
    </div>
    <div className="mt-[5px] flex h-5 items-center pl-[24px]">
      <MiniButton label="Monitor" tone={track.monitor ? 'gold' : 'gray'}><Speaker /></MiniButton>
      <MiniButton label="Input" className="ml-1 h-4 w-4">{track.output ? <OutputIcon /> : <InputIcon />}</MiniButton>
      <div className="ml-1 flex h-5 w-[171px] items-center bg-[linear-gradient(#0b0b0b_3px,#4b4c4b_3px,#3a3b3a_9px,#111_9px,#111_11px,#3a3b3a_11px,#4b4c4b_17px,#0b0b0b_17px)] font-[Roboto,sans-serif] text-[10px] text-[#a9a9a9]">
        {track.output && <span className="-mr-[6px] ml-[2px] h-[6px] w-1 self-end border-x border-[#35d23f]" />}
        {['-60', '-48', '-36', '-24', '-12'].map((n, i) => (
          <span
            key={n}
            className={`flex h-5 w-[30px] shrink-0 items-center justify-center bg-[linear-gradient(#ccc_3px,transparent_3px,transparent_16px,#ccc_16px)] bg-[length:1px_100%] bg-center bg-no-repeat ${
              i === 0 ? '-ml-[8px] text-[#888]' : ''
            } ${i > 2 ? 'text-[#ddd]' : ''}`}
          >
            {n}
          </span>
        ))}
        <span className="-ml-3 flex-1 pr-1 text-right text-white">{track.peak}</span>
      </div>
    </div>
  </section>
);

// ---------- arrange view ----------

const badge = 'h-[14px] w-[14px] border border-black bg-[#dcdcdc] font-[Roboto,sans-serif] text-[8px] leading-[12px] font-medium';

const ItemBadges = ({ full, className = '' }) => (
  <div className={`relative z-10 flex gap-px ${className}`}>
    <button type="button" className={badge}>M</button>
    {full && (
      <>
        <button type="button" className={badge}>FX</button>
        <button type="button" aria-label="Envelope" className="ml-px h-[14px] w-[14px] border border-black bg-white">
          <svg viewBox="0 0 12 12" className="h-3 w-3"><path d="M1 9h2l3-5h1l4 4" stroke="#000" strokeWidth="1.500" fill="none" /><path d="M4 2h3v3H4zM8 6h3v3H8zM1 8h3v3H1z" fill="#000" /></svg>
        </button>
      </>
    )}
  </div>
);

const Corner = () => <span className="absolute bottom-0 left-0 border-b-[6px] border-l-[6px] border-b-[#a08a3e] border-l-transparent [transform:scaleX(-1)]" />;

const drumAmps = range(55).map((x) => {
  const spike = Math.max(0, Math.cos(((x - 3) / 7.2) * Math.PI * 2));
  return x > 52 ? 7 - (x - 52) * 2 : 7 + 10 * Math.sqrt(spike) * (x % 3 === 0 ? 0.85 : 1);
});

const mirrorPath = (amps, mid) =>
  `M0 ${mid}${amps.map((a, x) => `L${x} ${mid - Math.round(a)}`).join('')}${amps
    .map((a, x) => `L${amps.length - 1 - x} ${mid + Math.round(amps[amps.length - 1 - x])}`)
    .join('')}Z`;

const drumTop = mirrorPath(drumAmps, 35);
const drumBottom = mirrorPath(drumAmps, 106);

const DrumItem = ({ index }) => {
  const left = barX(4 + index * 2);
  const width = barX(6 + index * 2) - left;
  return (
    <div
      className="absolute inset-y-0 border-t-2 border-r border-b border-[#26343c] bg-[#9dc8db]"
      style={{ left, width }}
    >
      <svg className="absolute inset-0 h-full w-full">
        <path d={drumTop} fill="#404040" />
        <path d={drumBottom} fill="#404040" />
        <path d="M0 100.500h57" stroke="#b5651d" />
      </svg>
      <ItemBadges full className="mt-px ml-[7px]" />
      <span className="absolute bottom-0 left-[7px] font-['Liberation_Sans',sans-serif] text-[11px] leading-[14px] text-[#1e2f36]">-4.63dB</span>
      <Corner />
    </div>
  );
};

const MidiItem = ({ index }) => {
  const left = barX(12 + index);
  const width = barX(13 + index) - left;
  return (
    <div
      className={`absolute inset-y-0 border-r border-b border-[#26343c] ${index === 9 ? 'bg-[#ebc940]' : 'bg-[#9dc8db]'}`}
      style={{ left, width }}
    >
      <svg className="absolute inset-0 h-full w-full">
        <path d="M1 44.500h26" stroke="#333" strokeWidth="2" strokeDasharray="3 2 2 1 4 3" />
        <path d="M0 72.500h29" stroke="#b5651d" />
      </svg>
      <ItemBadges className="mt-[2px] ml-[7px]" />
      <Corner />
    </div>
  );
};

// gaps in the glued vocal take: [x, width]
const gaps = [
  [2, 2], [5, 4], [12, 1], [22, 1], [32, 1], [43, 2], [64, 1], [68, 1], [76, 1], [86, 2], [90, 1], [94, 2], [125, 1], [133, 1],
  [142, 2], [146, 1], [152, 1], [158, 1], [175, 2], [180, 1], [189, 1], [209, 2], [225, 1], [231, 1], [237, 1], [256, 1],
  [265, 1], [269, 1], [293, 1], [302, 1], [308, 1], [317, 2], [322, 1], [344, 1], [350, 2], [367, 1], [371, 1], [406, 1],
  [427, 1], [432, 1], [458, 1], [461, 1], [486, 1], [490, 1], [514, 4], [530, 1], [543, 1], [570, 1], [573, 1], [598, 1],
];

const noise = (i) => Math.abs(Math.sin(i * 12.9898) * 43758.5453) % 1;

const VocalWave = () => (
  <svg className="absolute inset-0 h-full w-full">
    {[1, 73].map((top, ch) => (
      <g key={top}>
        <rect x="1" y={top} width="678" height="70" fill="#404240" />
        {gaps.map(([x, w]) => (
          <g key={x} fill="#9dc8db" opacity={w > 1 ? 1 : 0.8}>
            <path d={`M${x} ${top}h${w + 0.4}l-${w / 2} 34h-.4zM${x} ${top + 70}h${w + 0.4}l-${w / 2}-34h-.4z`} />
            {w > 3 && <rect x={x} y={top} width={w} height="70" />}
          </g>
        ))}
        {range(339).map((i) => {
          const late = i > 185;
          const n = noise(i + ch) * noise(i + 9);
          const h = late ? 1 + Math.round(n * 3) : Math.round(n * n * 6);
          const edge = Math.round(noise(i + 31 + ch) * noise(i + 70) * (late ? 2 : 4));
          return (
            <g key={i} fill="#9dc8db">
              <rect x={i * 2} y={ch === 0 ? 71 - h : 73} width="2" height={h} />
              <rect x={i * 2} y={ch === 0 ? 1 : 143 - edge} width="2" height={edge} />
            </g>
          );
        })}
        <path d={`M0 ${top + 35}h9M679 ${top + 35}h12`} stroke="#26343c" />
      </g>
    ))}
    <path d="M372 71h307" stroke="#c9b48a" strokeWidth="2" />
    <path d="M0 71.500h691" stroke="#b5651d" />
  </svg>
);

const VocalItem = () => (
  <div className="absolute inset-y-0 border border-[#26343c] bg-[#9dc8db]" style={{ left: barX(14), width: 691 }}>
    <VocalWave />
    <div className="relative z-10 flex pt-[2px] pl-[6px]">
      <ItemBadges full />
      <span className="ml-[4px] h-[13px] bg-[#9dc8db] font-[Roboto,sans-serif] text-[12px] leading-[13px] text-[#1e2f36]">-08.wav glued</span>
    </div>
    <Corner />
  </div>
);

const Ruler = () => (
  <div className="relative h-[33px] shrink-0 overflow-hidden bg-[#a1a1a1] font-['Liberation_Sans',sans-serif] text-[12px] font-bold">
    {range(52).map((bar) => (
      <div
        key={bar}
        className={`absolute bottom-0 border-l border-black ${bar % 4 === 0 ? 'h-[30px]' : 'h-3'}`}
        style={{ left: barX(bar) }}
      >
        {bar % 4 === 0 && <span className="block pl-[3px] leading-[10px] whitespace-nowrap">{bar + 1}.1.00</span>}
      </div>
    ))}
    <svg className="absolute bottom-0 h-[10px] w-[57px]" style={{ left: barX(4) }}>
      <rect y="5" width="57" height="5" fill="#f0c43c" />
      <path d="M0 5h57" stroke="#000" />
      <path d="M0 0h10L0 9zM56 0H46l10 9z" fill="#e2b93b" stroke="#000" />
    </svg>
    <svg className="absolute top-[2px] h-[7px] w-[15px]" style={{ left: barX(14) - 7 }}>
      <path d="M0 0h14L7 6z" fill="#b8902c" stroke="#222" />
    </svg>
  </div>
);

const ScrollButton = ({ label, children }) => (
  <button type="button" aria-label={label} className="flex h-4 w-4 shrink-0 items-center justify-center border border-[#777] bg-[#dedede] text-[11px] leading-none font-bold text-[#888]">
    {children}
  </button>
);

const Arrange = () => (
  <div className="flex min-w-0 flex-1 flex-col border-l border-black">
    <div className="mt-[6px] h-[13px] bg-[#b6b6b6]" />
    <div className="mt-3 h-3 bg-[#575757]" />
    <Ruler />
    <div className="flex min-h-0 flex-1">
      <div className="relative flex min-w-0 flex-1 flex-col overflow-hidden bg-[#787878]">
        <div className="h-[128px] border-b border-[#bbb] bg-[#e9e9e9]" />
        <div className="relative h-[143px] border-b border-[#bbb] bg-[#e9e9e9]">
          {range(20).map((i) => <DrumItem key={i} index={i} />)}
        </div>
        <div className="relative h-[143px] border-b border-[#bbb] bg-[#e9e9e9]">
          {range(32).map((i) => <MidiItem key={i} index={i} />)}
        </div>
        <div className="relative h-[143px] border-b border-[#bbb] bg-[#e9e9e9]">
          <VocalItem />
        </div>
        {range(52).map((bar) => (
          <div
            key={bar}
            className="absolute inset-y-0 w-px bg-[repeating-linear-gradient(#000_0px,#000_1px,transparent_1px,transparent_2px)]"
            style={{ left: barX(bar) }}
          />
        ))}
        <div className="absolute inset-y-0 bg-black/13" style={{ left: barX(4), width: 57 }} />
        <div className="absolute inset-y-0 border-x border-[#ffce3d]" style={{ left: barX(4), width: 57 }} />
        <div className="absolute inset-y-0 w-px bg-black" style={{ left: barX(14) }} />
      </div>
      <div className="flex w-4 flex-col bg-[#bdbdbd]">
        <ScrollButton label="Scroll up">▴</ScrollButton>
        <div className="flex flex-1 flex-col items-center justify-between border border-[#777] bg-linear-to-r from-[#f2f2f2] to-[#cfcfcf] py-1">
          <span className="h-[5px] w-[11px] border-y border-dotted border-[#999]" />
          <span className="h-[7px] w-[10px] border-y border-[#777] bg-[linear-gradient(#777,#777)] bg-[length:100%_1px] bg-center bg-no-repeat" />
          <span className="h-[5px] w-[11px] border-y border-dotted border-[#999]" />
        </div>
        <ScrollButton label="Scroll down">▾</ScrollButton>
        <ScrollButton label="Zoom in vertically">+</ScrollButton>
        <div className="h-1 bg-[#eee]" />
        <ScrollButton label="Zoom out vertically">−</ScrollButton>
      </div>
    </div>
    <div className="flex h-4 bg-[#bdbdbd] pr-4">
      <ScrollButton label="Scroll left">◂</ScrollButton>
      <div className="flex w-[70%] items-center justify-between border border-[#777] bg-linear-to-b from-[#f2f2f2] to-[#cfcfcf] px-1">
        <span className="h-[10px] w-1 border-x border-dotted border-[#999]" />
        <span className="h-[10px] w-[7px] bg-[repeating-linear-gradient(90deg,#777_0px,#777_1px,transparent_1px,transparent_3px)]" />
        <span className="h-[10px] w-1 border-x border-dotted border-[#999]" />
      </div>
      <div className="flex-1 border-b border-black" />
      <ScrollButton label="Scroll right">▸</ScrollButton>
      <ScrollButton label="Zoom in">+</ScrollButton>
      <div className="w-1 bg-[#eee]" />
      <ScrollButton label="Zoom out">−</ScrollButton>
    </div>
  </div>
);

// ---------- transport ----------

const transportIcons = {
  Rewind: <path d="M10 3L4 10l6 7M17 3l-6 7 6 7" stroke="#3c3c3c" strokeWidth="2.500" fill="none" />,
  Play: <path d="M6 3v14l9-7z" fill="#3c3c3c" />,
  Pause: <path d="M4 4h5v13H4zM12 4h5v13h-5z" fill="#3c3c3c" />,
  Stop: <path d="M4 4h12v12H4z" fill="#3c3c3c" />,
  Forward: <path d="M3 3l6 7-6 7M10 3l6 7-6 7" stroke="#3c3c3c" strokeWidth="2.500" fill="none" />,
  Record: <circle cx="10" cy="10" r="7" fill="#a53a3a" />,
  Repeat: <g fill="none" stroke="#3c3c3c" strokeWidth="2"><path d="M6 7H3v10h14V7h-2" /><path d="M7 6h6" /><path d="M8 2v8l5-4z" fill="#3c3c3c" stroke="none" /></g>,
};

const Transport = () => (
  <div className="flex h-9 items-center bg-[repeating-linear-gradient(#d2d2d2_0px,#d2d2d2_2px,#c8c8c8_2px,#c8c8c8_3px)] pr-2 pb-1 text-[10px]">
    <div className="flex-1" />
    <div className="flex items-center">
      <div className="flex rounded border border-[#444]">
        {Object.entries(transportIcons).map(([name, drawing]) => (
          <button key={name} type="button" aria-label={name} className="flex h-[22px] w-6 items-center justify-center border-r border-[#666] bg-linear-to-b from-[#f2f2f2] to-[#cccccc] last:border-r-0">
            <svg viewBox="0 0 20 20" className="h-[18px] w-[18px]">{drawing}</svg>
          </button>
        ))}
      </div>
      <button type="button" className="mr-[10px] ml-[5px] h-[22px] w-[21px] border-2 border-[#777] bg-[#ddd] font-[Roboto,sans-serif] text-[8px] text-[#333]">OFF</button>
      <div className="flex h-[23px] w-[287px] items-center border-t border-l border-black bg-[#a3a3a3] text-black">
        <span className="flex-1 pl-[94px] text-center text-[18px] leading-[22px]">0:26.250</span>
        <span className="pl-[38px] text-[12px]">[Stopped]</span>
      </div>
    </div>
    <div className="flex flex-1 items-center justify-end font-[Roboto,sans-serif]">
      <button type="button" className="h-4 w-[33px] border-r border-b border-black pl-2">BPM</button>
      <span className="ml-[2px] h-[15px] w-[54px] border-t border-l border-black text-center">128</span>
      <span className="mx-[5px] w-[40px]">Selection:</span>
      {['0:07.500', '0:11.250', '0:03.750'].map((t) => (
        <span key={t} className="ml-[2px] h-[15px] w-[64px] border-t border-l border-black text-center">{t}</span>
      ))}
    </div>
  </div>
);

// ---------- window chrome and task bar ----------

const ReaperLogo = ({ className }) => (
  <svg viewBox="0 0 20 20" className={className}>
    <path d="M1 7q0-5 9-5.500Q19 2 19 7q0 8-9 12Q1 15 1 7z" fill="#8b9692" stroke="#4b524e" />
    <path d="M4 7q1-3 6-3-3 4 2 12-8-3-8-9z" fill="#e9efe9" />
    <path d="M9 4q7-1 8 3-1 7-6 9-1-4 1-6-5-1-3-6z" fill="#3f9a5e" />
    <circle cx="10" cy="8" r="2" fill="#2e3431" />
  </svg>
);

const menu = ['File', 'Edit', 'View', 'Insert', 'Item', 'Track', 'Options', 'Actions', 'Extensions', 'Help'];

const WindowHeader = () => (
  <header>
    <div className="flex h-[18px] items-center bg-linear-to-r from-[#0e286c] to-[#a6caf0] pr-[2px] pl-[2px] text-[11px] font-bold text-white">
      <ReaperLogo className="mr-[2px] h-4 w-4" />
      <span className="flex-1">test abl-reaper [modified] - REAPER v5.0pre17/x64 - EVALUATION LICENSE</span>
      {['Minimize', 'Restore', 'Close'].map((name) => (
        <button key={name} type="button" aria-label={name} className="flex h-[14px] w-4 items-center justify-center border border-t-white border-r-[#404040] border-b-[#404040] border-l-white bg-[#d4d0c8] last:ml-[2px]">
          <svg viewBox="0 0 12 12" className="h-[11px] w-[11px]" stroke="#000" fill="none">
            {name === 'Minimize' && <path d="M2 9.500h6" strokeWidth="2" />}
            {name === 'Restore' && <path d="M4 4V1.500h6V7H8M2 5h6v5H2zM4 2h6M2 5.500h6" />}
            {name === 'Close' && <path d="M2 2l7 7M9 2l-7 7" strokeWidth="1.800" />}
          </svg>
        </button>
      ))}
    </div>
    <nav className="flex h-5 items-center bg-[#d4d0c8] px-[5px] pt-[2px] text-[11px]">
      {menu.map((m) => <a key={m} href="#" className="mr-[11px] text-black">{m}</a>)}
      <span className="ml-[9px] flex-1">[Change media item selection]</span>
      <span className="pr-[3px]">D:\4 REAPER PR\Audioz (120 GB) [44.1kHz 24bit WAV : 2/2ch 128spls ~3.4/5.1ms ASIO]</span>
    </nav>
  </header>
);

const launchers = {
  Calculator: <g><rect x="5" y="2" width="22" height="28" rx="2" fill="#cfe3f2" stroke="#6b9cc4" /><rect x="8" y="5" width="16" height="7" fill="#fff" stroke="#6b9cc4" />{range(12).map((i) => <rect key={i} x={8 + (i % 4) * 4.2} y={15 + Math.floor(i / 4) * 4.500} width="3" height="3" fill={i === 11 ? '#e8953a' : '#6f95b8'} />)}</g>,
  Sampler: <g><rect width="32" height="32" rx="5" fill="#23262a" /><path d="M6 3v27" stroke="#3aa0e8" strokeWidth="4" strokeDasharray="3 2" /><path d="M13 27q2-15 17-17M17 28q2-11 13-12" stroke="#7bdc2e" strokeWidth="4" strokeDasharray="3 1" fill="none" /><path d="M11 15q5-10 19-10" stroke="#e33224" strokeWidth="3" strokeDasharray="3 1" fill="none" /></g>,
  Notebook: <g transform="rotate(18 16 16)"><rect x="7" y="3" width="19" height="25" fill="#13702c" stroke="#0b3315" strokeWidth="2" /><path d="M11 9h11M11 13h11M11 17h8" stroke="#6ed082" strokeWidth="1.500" /><path d="M7 28h19" stroke="#eee" strokeWidth="2" /></g>,
  Tuner: <g><circle cx="16" cy="16" r="15" fill="#1b1716" /><circle cx="16" cy="7" r="3" fill="#f06a2c" /><path d="M14 6h4l2 19h-8z" fill="#e8531c" /><path d="M8 23h16" stroke="#8a2a10" strokeWidth="2" /></g>,
  Cubase: <g fill="none"><path d="M19 4L6 15l11 13" stroke="#c3404c" strokeWidth="4" /><path d="M27 10l-10 6 9 8z" fill="#8f1f30" /></g>,
  Live: <g><rect width="32" height="32" rx="2" fill="#4b4b4b" /><text x="16" y="21" textAnchor="middle" fontSize="13" fontFamily="Liberation Sans, sans-serif" fill="#eee">Live</text></g>,
};

const TaskIcon = ({ name, children }) => (
  <button type="button" aria-label={name} className="mr-[18px] h-8 w-8 shrink-0">
    <svg viewBox="0 0 32 32" className="h-8 w-8">{children}</svg>
  </button>
);

const Taskbar = () => (
  <footer className="flex h-[44px] shrink-0 items-center border-t border-white bg-[#d4d0c8] px-[2px] text-[12px]">
    <button type="button" className="mr-[10px] flex h-[36px] w-[51px] items-center gap-px border-2 border-t-white border-r-[#555] border-b-[#555] border-l-white text-[11px] font-bold">
      <svg viewBox="0 0 16 16" className="h-4 w-4 shrink-0">
        <path d="M2 3q3-2 6 0L7 8q-3-2-6 0z" fill="#e8542a" /><path d="M9 3q3 2 6 0l-1 5q-3 2-6 0z" fill="#7ab83a" />
        <path d="M1 9q3-2 6 0l-1 5q-3-2-6 0z" fill="#3a86d8" /><path d="M8 9q3 2 6 0l-1 5q-3 2-6 0z" fill="#f3c02c" />
      </svg>
      Пуск
    </button>
    <button type="button" className="mr-[8px] flex h-[36px] w-[160px] items-center gap-[5px] border-2 border-t-white border-r-[#555] border-b-[#555] border-l-white pl-1 text-[11px] whitespace-nowrap">
      <svg viewBox="0 0 30 30" className="h-[29px] w-[29px] shrink-0">
        <circle cx="15" cy="15" r="14" fill="#3f86cc" stroke="#2a5f99" />
        <circle cx="12" cy="10" r="7" fill="#b9dcf4" opacity=".7" />
        <text x="15" y="21" textAnchor="middle" fontSize="16" fontWeight="bold" fontStyle="italic" fontFamily="Liberation Serif, serif" fill="#1d8a3c">TC</text>
      </svg>
      MK^ - Total Comman...
    </button>
    {Object.entries(launchers).map(([name, drawing]) => <TaskIcon key={name} name={name}>{drawing}</TaskIcon>)}
    <button type="button" aria-label="Reaper" className="mr-[12px] shrink-0"><ReaperLogo className="h-[30px] w-[30px]" /></button>
    <button type="button" className="mr-[10px] flex h-[36px] w-[160px] items-center gap-[6px] border-2 border-t-[#555] border-r-white border-b-white border-l-[#555] bg-white pl-1 text-[11px] font-bold whitespace-nowrap">
      <ReaperLogo className="h-[28px] w-[28px] shrink-0" />
      test abl-reaper [m...
    </button>
    <TaskIcon name="Lame">
      <path d="M16 3q12 0 12 13v11h-8q-15 1-16-12 1-12 12-12z" fill="#b8f03a" />
      <path d="M13 9q6-3 8 3l-6 4q-5-3-2-7z" fill="#d4d0c8" />
      <text x="12" y="26" fontSize="8" fontWeight="bold" fontFamily="Liberation Sans, sans-serif" fill="#eafcc0">lame</text>
    </TaskIcon>
    <TaskIcon name="Yandex">
      <circle cx="16" cy="16" r="15" fill="#f4f4f4" stroke="#ccc" />
      <path d="M3 6q8 1 12 12v12M29 3q-6 3-13 15" stroke="#e8141c" strokeWidth="5" fill="none" />
    </TaskIcon>
    <TaskIcon name="Firefox">
      <circle cx="16" cy="16" r="15" fill="#e8731c" /><circle cx="18" cy="12" r="9.500" fill="#1f63b0" />
      <path d="M1 16Q2 4 10 3q-2 4 3 6l5 2-5 4q0 7 8 6 7-2 7-10 5 10-2 16-8 6-17 1Q1 23 1 16z" fill="#f08a24" />
      <path d="M10 3q-2 4 2 6l5 3-6 4z" fill="#c7480f" />
    </TaskIcon>
    <div className="flex-1" />
    <div className="flex h-[38px] items-center gap-[7px] border border-t-[#808080] border-r-white border-b-white border-l-[#808080] pr-px pl-[6px]">
      <svg viewBox="0 0 18 18" className="h-[17px] w-[17px]"><path d="M16 3H8Q2 3 2 9t6 6h1M9 9h6v6h-3" stroke="#0b0b0b" strokeWidth="3.500" fill="none" /></svg>
      <svg viewBox="0 0 18 18" className="h-[17px] w-[17px]"><path d="M4 1h5v4h1v6H3V5h1z" fill="#777" /><path d="M6 11v5" stroke="#777" strokeWidth="2" /><circle cx="12" cy="12" r="5.500" fill="#2b9a2c" /><path d="M9 12l2 2 4-4" stroke="#fff" strokeWidth="1.800" fill="none" /></svg>
      <svg viewBox="0 0 18 18" className="h-[17px] w-[17px]"><circle cx="9" cy="9" r="8" fill="#d8dcf0" stroke="#7a80a8" /><path d="M9 9L3 4q4-4 8-2z" fill="#8fb4f0" /><circle cx="9" cy="9" r="2.500" fill="#fff" stroke="#6a6a9c" /></svg>
      <svg viewBox="0 0 18 18" className="h-[17px] w-[17px]"><path d="M2 8l14 2M5 13l9-9M6 5l7 9" stroke="#c9b9b9" strokeWidth="2" /><circle cx="9" cy="10" r="3.500" fill="#c23a2c" /></svg>
      <svg viewBox="0 0 18 18" className="h-[17px] w-[17px]"><path d="M1 6h3l4-4v14l-4-4H1z" fill="#eee" stroke="#666" /><path d="M11 5q3 4 0 8M14 3q4 6 0 12" stroke="#888" fill="none" /></svg>
      <svg viewBox="0 0 18 18" className="h-[17px] w-[17px]"><rect x="5" y="3" width="12" height="9" fill="#eee" stroke="#555" /><path d="M2 1v5q3 3 3 8h9" stroke="#555" strokeWidth="1.500" fill="none" /><path d="M8 8l8 8M16 8l-8 8" stroke="#d41a1a" strokeWidth="3" /></svg>
      <div className="mr-[2px] ml-[4px] text-center text-[11px] leading-[16px]">1:24<br />18.03.2015</div>
      <svg viewBox="0 0 18 14" className="h-[14px] w-[17px]"><rect x="1" y="1" width="16" height="9" fill="#2f78c8" stroke="#1d3f6c" /><path d="M5 12h12" stroke="#1d3f6c" strokeWidth="2" /></svg>
    </div>
  </footer>
);

const Grip = () => (
  <div className="mr-px w-1 bg-white pl-px"><div className="h-full w-px bg-[#999]" /></div>
);

export default function App() {
  return (
    <div className="flex min-h-screen flex-col overflow-hidden bg-[#cfcfcf] font-['DejaVu_Sans_Condensed','DejaVu_Sans',sans-serif] text-black">
      <WindowHeader />
      <Toolbar groups={topToolbar} className="h-[34px] pt-[2px]" />
      <div className="flex flex-1">
        <LeftStrip />
        <main className="flex min-w-0 flex-1 flex-col pr-[6px] pl-[5px]">
          <div className="flex">
            <Grip />
            <Toolbar groups={midToolbar} className="h-[47px] flex-1 border border-black pt-[7px]" />
          </div>
          <div className="flex flex-1">
            <div className="mr-[7px] flex w-[242px] shrink-0 flex-col">
              <div className="mt-[7px] grid grid-cols-8 gap-px border border-[#888] bg-[#999] p-px">
                {tcpIcons.map((name) => <ToolButton key={name} item={name} />)}
              </div>
              <div className="mt-[6px] flex min-h-0 flex-1 flex-col overflow-hidden border border-black bg-[#787878]">
                <div className="-mt-[16px]">
                  {tracks.map((t) => <TrackPanel key={t.id} track={t} />)}
                </div>
              </div>
              <div className="h-[17px] pt-[2px] pl-1 text-[9px] leading-[14px]">Edit loop point</div>
            </div>
            <Arrange />
          </div>
          <Transport />
          <div className="flex">
            <Grip />
            <Toolbar groups={bottomToolbar} className="h-[42px] flex-1 border border-black pt-[5px]" />
          </div>
        </main>
        <MasterStrip />
      </div>
      <Taskbar />
    </div>
  );
}
